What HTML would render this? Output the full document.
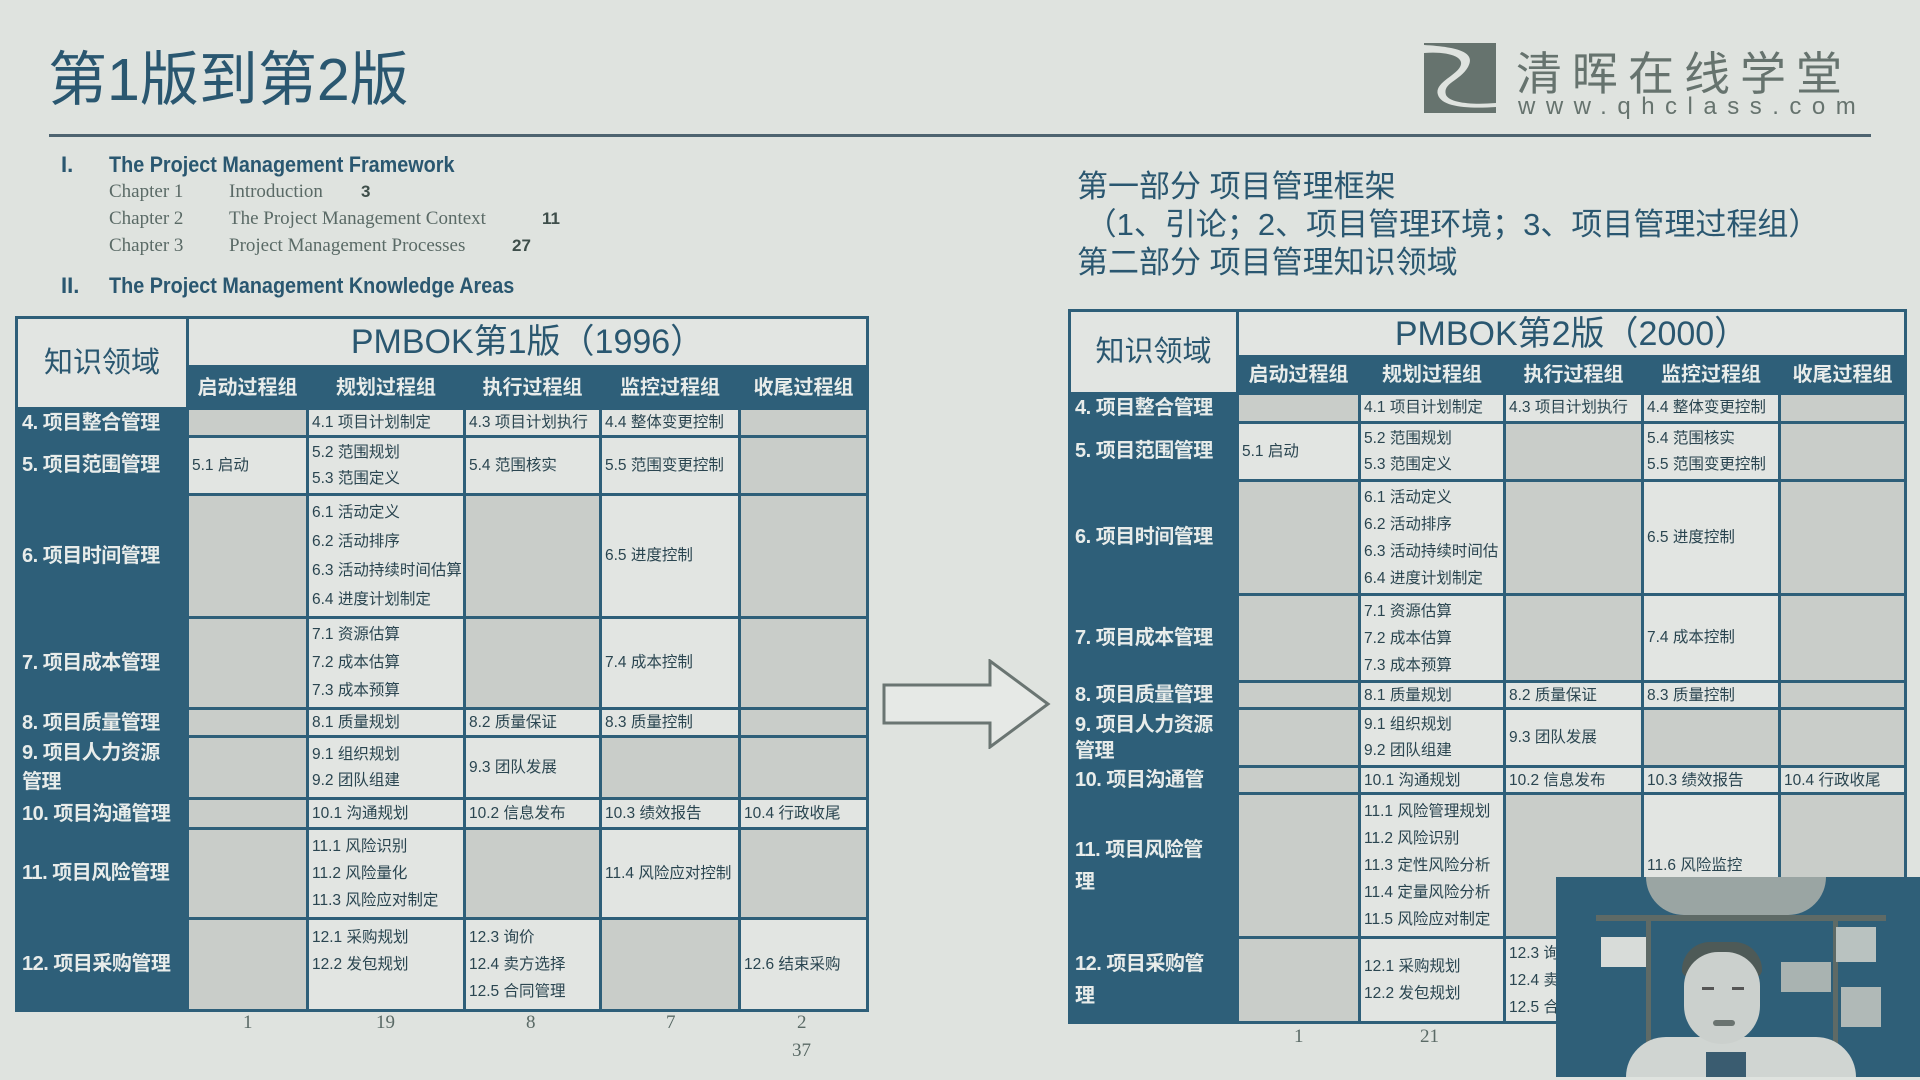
<!DOCTYPE html>
<html><head><meta charset="utf-8"><style>
*{margin:0;padding:0;box-sizing:border-box}
body{width:1920px;height:1080px;background:#dfe3df;position:relative;overflow:hidden;font-family:"Liberation Sans","Noto Sans CJK SC",sans-serif;color:#2a5770}
.a{position:absolute;white-space:nowrap}
table{position:absolute;border-collapse:collapse;table-layout:fixed;background:#2e5f79}
td{border:3px solid #2e5f79;font-size:15.5px;color:#2a4550;vertical-align:middle;padding:0 3px;overflow:hidden;white-space:nowrap;line-height:26px}
td.g{background:#c9cdc9}
td.w{background:#e2e5e2}
td.l{background:#2e5f79;color:#e8ecea;font-size:20px;font-weight:bold;padding-left:4px;line-height:29px;letter-spacing:-0.5px}
td.h{background:#2e5f79;color:#e8ecea;font-size:20px;font-weight:bold;text-align:center;line-height:30px}
td.t{background:#e2e5e2;color:#2a5770;font-size:34px;text-align:center;line-height:40px}
td.k{background:#e2e5e2;color:#2a5770;font-size:29px;text-align:center}
.ser{font-family:"Liberation Serif",serif;color:#5a6a66;font-size:19px}
</style></head><body>
<div class="a" style="left:48px;top:32px;font-size:59px;color:#2a5770">第1版到第2版</div>
<div class="a" style="left:49px;top:134px;width:1822px;height:3px;background:#4e6470"></div>
<svg class="a" style="left:1424px;top:43px" width="72" height="70" viewBox="0 0 72 70"><rect width="72" height="70" fill="#66736e"/><path d="M0 2 C36 4 52 10 44 24 C36 38 18 40 22 52 C26 60 48 62 72 60 L72 64 C44 66 18 64 14 52 C10 40 30 34 36 24 C42 14 24 8 0 10 Z" fill="#dfe3df"/></svg>
<div class="a" style="left:1516px;top:38px;font-size:46px;letter-spacing:10px;color:#66736e">清晖在线学堂</div>
<div class="a" style="left:1518px;top:93px;font-size:24px;letter-spacing:10.5px;color:#66736e">www.qhclass.com</div>
<div class="a" style="left:61px;top:152px;font-size:22px;font-weight:bold">I.</div>
<div class="a" style="left:109px;top:152px;font-size:22px;font-weight:bold;transform:scaleX(.9);transform-origin:left">The Project Management Framework</div>
<div class="a ser" style="left:109px;top:181px">Chapter 1</div><div class="a ser" style="left:229px;top:181px">Introduction</div><div class="a" style="left:361px;top:182px;font-size:17px;font-weight:bold;color:#3e4e4a">3</div>
<div class="a ser" style="left:109px;top:208px">Chapter 2</div><div class="a ser" style="left:229px;top:208px">The Project Management Context</div><div class="a" style="left:542px;top:209px;font-size:17px;font-weight:bold;color:#3e4e4a">11</div>
<div class="a ser" style="left:109px;top:235px">Chapter 3</div><div class="a ser" style="left:229px;top:235px">Project Management Processes</div><div class="a" style="left:512px;top:236px;font-size:17px;font-weight:bold;color:#3e4e4a">27</div>
<div class="a" style="left:61px;top:273px;font-size:22px;font-weight:bold">II.</div>
<div class="a" style="left:109px;top:273px;font-size:22px;font-weight:bold;transform:scaleX(.9);transform-origin:left">The Project Management Knowledge Areas</div>
<div class="a" style="left:1077px;top:168px;font-size:31px;line-height:38px;color:#2a5770">第一部分 项目管理框架<br>&nbsp;（1、引论；2、项目管理环境；3、项目管理过程组）<br>第二部分 项目管理知识领域</div>
<table style="left:15px;top:316px;width:851px;height:693px">
<colgroup><col style="width:171px"><col style="width:120px"><col style="width:157px"><col style="width:136px"><col style="width:139px"><col style="width:128px"></colgroup>
<tr style="height:49px"><td class="k" rowspan="2">知识领域</td><td class="t" colspan="5">PMBOK第1版（1996）</td></tr>
<tr style="height:42px"><td class="h">启动过程组</td><td class="h">规划过程组</td><td class="h">执行过程组</td><td class="h">监控过程组</td><td class="h">收尾过程组</td></tr>
<tr style="height:28px"><td class="l" style="line-height:22px">4. 项目整合管理</td><td class="g"></td><td class="w" style="line-height:22px">4.1 项目计划制定</td><td class="w" style="line-height:22px">4.3 项目计划执行</td><td class="w" style="line-height:22px">4.4 整体变更控制</td><td class="g"></td></tr>
<tr style="height:58px"><td class="l">5. 项目范围管理</td><td class="w">5.1 启动</td><td class="w">5.2 范围规划<br>5.3 范围定义</td><td class="w">5.4 范围核实</td><td class="w">5.5 范围变更控制</td><td class="g"></td></tr>
<tr style="height:123px"><td class="l">6. 项目时间管理</td><td class="g"></td><td class="w" style="line-height:29px">6.1 活动定义<br>6.2 活动排序<br>6.3 活动持续时间估算<br>6.4 进度计划制定</td><td class="g"></td><td class="w">6.5 进度控制</td><td class="g"></td></tr>
<tr style="height:91px"><td class="l">7. 项目成本管理</td><td class="g"></td><td class="w" style="line-height:28px">7.1 资源估算<br>7.2 成本估算<br>7.3 成本预算</td><td class="g"></td><td class="w">7.4 成本控制</td><td class="g"></td></tr>
<tr style="height:28px"><td class="l" style="line-height:22px">8. 项目质量管理</td><td class="g"></td><td class="w" style="line-height:22px">8.1 质量规划</td><td class="w" style="line-height:22px">8.2 质量保证</td><td class="w" style="line-height:22px">8.3 质量控制</td><td class="g"></td></tr>
<tr style="height:62px"><td class="l">9. 项目人力资源<br>管理</td><td class="g"></td><td class="w">9.1 组织规划<br>9.2 团队组建</td><td class="w">9.3 团队发展</td><td class="g"></td><td class="g"></td></tr>
<tr style="height:30px"><td class="l" style="line-height:24px">10. 项目沟通管理</td><td class="g"></td><td class="w" style="line-height:24px">10.1 沟通规划</td><td class="w" style="line-height:24px">10.2 信息发布</td><td class="w" style="line-height:24px">10.3 绩效报告</td><td class="w" style="line-height:24px">10.4 行政收尾</td></tr>
<tr style="height:90px"><td class="l">11. 项目风险管理</td><td class="g"></td><td class="w" style="line-height:27px">11.1 风险识别<br>11.2 风险量化<br>11.3 风险应对制定</td><td class="g"></td><td class="w">11.4 风险应对控制</td><td class="g"></td></tr>
<tr style="height:92px"><td class="l">12. 项目采购管理</td><td class="g"></td><td class="w" style="line-height:27px">12.1 采购规划<br>12.2 发包规划<br>&nbsp;</td><td class="w" style="line-height:27px">12.3 询价<br>12.4 卖方选择<br>12.5 合同管理</td><td class="g"></td><td class="w">12.6 结束采购</td></tr>
</table>
<div class="a ser" style="left:243px;top:1012px">1</div>
<div class="a ser" style="left:376px;top:1012px">19</div>
<div class="a ser" style="left:526px;top:1012px">8</div>
<div class="a ser" style="left:666px;top:1012px">7</div>
<div class="a ser" style="left:797px;top:1012px">2</div>
<div class="a ser" style="left:792px;top:1040px">37</div>
<svg class="a" style="left:882px;top:659px" width="170" height="90"><path d="M2 26 L108 26 L108 2 L166 45 L108 88 L108 64 L2 64 Z" fill="#e6e9e6" stroke="#6a7572" stroke-width="3"/></svg>
<table style="left:1068px;top:309px;width:836px;height:712px">
<colgroup><col style="width:168px"><col style="width:122px"><col style="width:145px"><col style="width:138px"><col style="width:137px"><col style="width:126px"></colgroup>
<tr style="height:46px"><td class="k" rowspan="2">知识领域</td><td class="t" colspan="5">PMBOK第2版（2000）</td></tr>
<tr style="height:37px"><td class="h">启动过程组</td><td class="h">规划过程组</td><td class="h">执行过程组</td><td class="h">监控过程组</td><td class="h">收尾过程组</td></tr>
<tr style="height:29px"><td class="l" style="line-height:22px">4. 项目整合管理</td><td class="g"></td><td class="w" style="line-height:22px">4.1 项目计划制定</td><td class="w" style="line-height:22px">4.3 项目计划执行</td><td class="w" style="line-height:22px">4.4 整体变更控制</td><td class="g"></td></tr>
<tr style="height:58px"><td class="l">5. 项目范围管理</td><td class="w">5.1 启动</td><td class="w">5.2 范围规划<br>5.3 范围定义</td><td class="g"></td><td class="w">5.4 范围核实<br>5.5 范围变更控制</td><td class="g"></td></tr>
<tr style="height:114px"><td class="l">6. 项目时间管理</td><td class="g"></td><td class="w" style="line-height:27px">6.1 活动定义<br>6.2 活动排序<br>6.3 活动持续时间估<br>6.4 进度计划制定</td><td class="g"></td><td class="w">6.5 进度控制</td><td class="g"></td></tr>
<tr style="height:87px"><td class="l">7. 项目成本管理</td><td class="g"></td><td class="w" style="line-height:27px">7.1 资源估算<br>7.2 成本估算<br>7.3 成本预算</td><td class="g"></td><td class="w">7.4 成本控制</td><td class="g"></td></tr>
<tr style="height:27px"><td class="l" style="line-height:21px">8. 项目质量管理</td><td class="g"></td><td class="w" style="line-height:21px">8.1 质量规划</td><td class="w" style="line-height:21px">8.2 质量保证</td><td class="w" style="line-height:21px">8.3 质量控制</td><td class="g"></td></tr>
<tr style="height:58px"><td class="l" style="line-height:26px">9. 项目人力资源<br>管理</td><td class="g"></td><td class="w">9.1 组织规划<br>9.2 团队组建</td><td class="w">9.3 团队发展</td><td class="g"></td><td class="g"></td></tr>
<tr style="height:27px"><td class="l" style="line-height:21px">10. 项目沟通管</td><td class="g"></td><td class="w" style="line-height:21px">10.1 沟通规划</td><td class="w" style="line-height:21px">10.2 信息发布</td><td class="w" style="line-height:21px">10.3 绩效报告</td><td class="w" style="line-height:21px">10.4 行政收尾</td></tr>
<tr style="height:144px"><td class="l" style="line-height:32px">11. 项目风险管<br>理</td><td class="g"></td><td class="w" style="line-height:27px">11.1 风险管理规划<br>11.2 风险识别<br>11.3 定性风险分析<br>11.4 定量风险分析<br>11.5 风险应对制定</td><td class="g"></td><td class="w">11.6 风险监控</td><td class="g"></td></tr>
<tr style="height:85px"><td class="l" style="line-height:32px">12. 项目采购管<br>理</td><td class="g"></td><td class="w" style="line-height:27px">12.1 采购规划<br>12.2 发包规划</td><td class="w" style="line-height:27px">12.3 询价<br>12.4 卖方选择<br>12.5 合同管理</td><td class="g"></td><td class="g"></td></tr>
</table>
<div class="a ser" style="left:1294px;top:1026px">1</div>
<div class="a ser" style="left:1420px;top:1026px">21</div>
<div class="a" style="left:1556px;top:877px;width:364px;height:200px;background:#2f5f78;overflow:hidden">
<div class="a" style="left:90px;top:0;width:180px;height:38px;background:#9aa5a3;border-radius:0 0 60px 60px"></div>
<div class="a" style="left:40px;top:38px;width:290px;height:6px;background:#5e6a66"></div>
<div class="a" style="left:90px;top:42px;width:5px;height:158px;background:#5e6a66"></div>
<div class="a" style="left:277px;top:42px;width:5px;height:158px;background:#5e6a66"></div>
<div class="a" style="left:45px;top:60px;width:45px;height:30px;background:#d8dcd9"></div>
<div class="a" style="left:280px;top:50px;width:40px;height:35px;background:#b9c2c0"></div>
<div class="a" style="left:225px;top:85px;width:50px;height:30px;background:#a9b3b1"></div>
<div class="a" style="left:285px;top:110px;width:40px;height:40px;background:#b0b9b7"></div>
<div class="a" style="left:70px;top:160px;width:230px;height:60px;background:#d0d5d2;border-radius:40px 40px 0 0"></div>
<div class="a" style="left:126px;top:65px;width:80px;height:35px;background:#4e5a57;border-radius:40px 40px 10px 10px"></div>
<div class="a" style="left:128px;top:75px;width:76px;height:92px;background:#cbd0cd;border-radius:36px 36px 40px 40px"></div>
<div class="a" style="left:146px;top:110px;width:12px;height:3px;background:#555"></div>
<div class="a" style="left:176px;top:110px;width:12px;height:3px;background:#555"></div>
<div class="a" style="left:157px;top:143px;width:22px;height:6px;background:#6a7370;border-radius:3px"></div>
<div class="a" style="left:150px;top:175px;width:40px;height:25px;background:#3a5c70"></div>
</div>
</body></html>
